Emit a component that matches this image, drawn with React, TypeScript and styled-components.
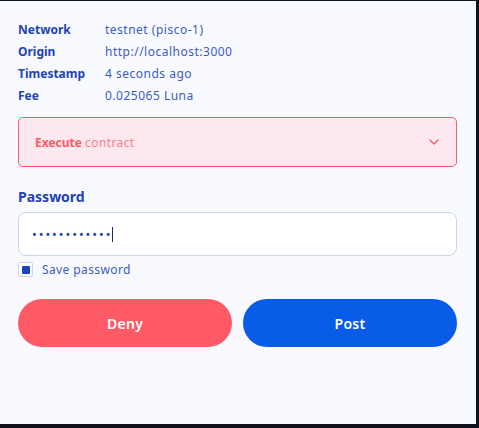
import React from "react";
import styled, { createGlobalStyle } from "styled-components";

const Global = createGlobalStyle`
  html, body { margin: 0; padding: 0; background: #0e101b; }
  body { font-family: "Noto Sans", "Open Sans", sans-serif; }
  * { box-sizing: border-box; }
`;

const Panel = styled.div`
  width: 476px;
  height: 423px;
  margin-top: 1px;
  background: #f8faff;
  padding: 18px 19px 0 18px;
  display: flex;
  flex-direction: column;
`;

const Details = styled.dl`
  margin: 0;
  display: grid;
  grid-template-columns: 87px 1fr;
  font-size: 12px;
  line-height: 22px;
`;

const Term = styled.dt`
  font-weight: 700;
  color: #2043b5;
`;

const Value = styled.dd`
  margin: 0;
  color: #3b5cc4;
  letter-spacing: 0.5px;
`;

const Message = styled.div`
  margin-top: 10px;
  height: 50px;
  border: 1px solid #ff5a65;
  border-radius: 5px;
  background: #fde8ef;
  display: flex;
  align-items: center;
  justify-content: space-between;
  padding: 0 17px 0 16px;
  font-size: 12px;
  color: #ff5a65;
`;

const Strong = styled.span`
  font-weight: 700;
`;

const Light = styled.span`
  color: #ff7c86;
  letter-spacing: 0.4px;
`;

const Label = styled.div`
  margin-top: 20px;
  font-size: 14px;
  font-weight: 700;
  color: #2043b5;
  line-height: 20px;
`;

const Field = styled.div`
  margin-top: 5px;
  height: 44px;
  border: 1px solid #cbd5ee;
  border-radius: 8px;
  background: #ffffff;
  display: flex;
  align-items: center;
  padding: 0 13px;
  color: #2043b5;
  font-size: 12px;
`;

const Dots = styled.span`
  letter-spacing: 2px;
  font-size: 12.5px;
`;

const Caret = styled.span`
  display: inline-block;
  width: 1px;
  height: 15px;
  background: #1b2a6b;
`;

const CheckRow = styled.label`
  margin-top: 6px;
  height: 15px;
  display: flex;
  align-items: center;
  gap: 9px;
  font-size: 12px;
  color: #3b5cc4;
  letter-spacing: 0.4px;
`;

const Box = styled.span`
  width: 15px;
  height: 15px;
  border: 1px solid #cbd5ee;
  border-radius: 2px;
  background: #fff;
  display: flex;
  align-items: center;
  justify-content: center;
  &::after {
    content: "";
    width: 8px;
    height: 8px;
    border-radius: 1px;
    background: #2043b5;
  }
`;

const Actions = styled.div`
  margin-top: 22px;
  display: grid;
  grid-template-columns: 1fr 1fr;
  gap: 11px;
`;

const Button = styled.button<{ $variant: "danger" | "primary" }>`
  height: 48px;
  border: 0;
  border-radius: 24px;
  background: ${(p) => (p.$variant === "danger" ? "#ff5a65" : "#085ce8")};
  color: #ffffff;
  font-family: inherit;
  font-size: 14px;
  font-weight: 600;
  letter-spacing: 0.3px;
`;

export default function App() {
  return (
    <>
      <Global />
      <Panel>
        <Details>
          <Term>Network</Term>
          <Value>testnet (pisco-1)</Value>
          <Term>Origin</Term>
          <Value>http://localhost:3000</Value>
          <Term>Timestamp</Term>
          <Value>4 seconds ago</Value>
          <Term>Fee</Term>
          <Value>0.025065 Luna</Value>
        </Details>
        <Message>
          <span>
            <Strong>Execute</Strong> <Light>contract</Light>
          </span>
          <svg width="10" height="6" viewBox="0 0 10 6" fill="none">
            <path d="M1 1l4 4 4-4" stroke="#ff5a65" strokeWidth="1.4" strokeLinecap="round" strokeLinejoin="round" />
          </svg>
        </Message>
        <Label>Password</Label>
        <Field>
          <Dots>••••••••••••</Dots>
          <Caret />
        </Field>
        <CheckRow>
          <Box />
          Save password
        </CheckRow>
        <Actions>
          <Button $variant="danger">Deny</Button>
          <Button $variant="primary">Post</Button>
        </Actions>
      </Panel>
    </>
  );
}
